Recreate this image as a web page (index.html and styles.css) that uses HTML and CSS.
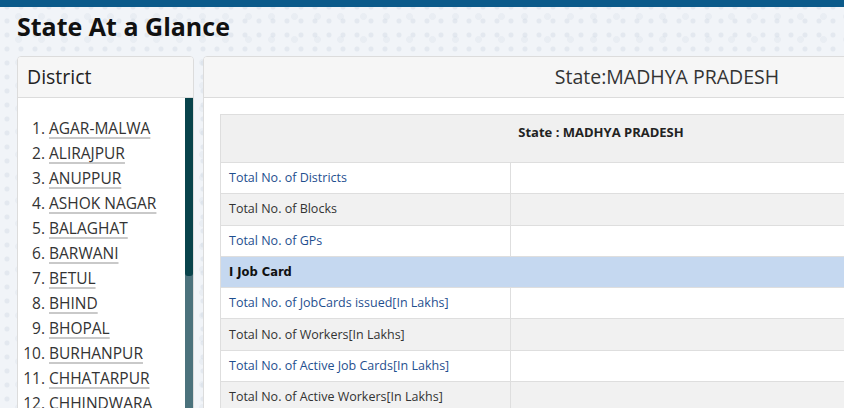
FILE: index.html
```html
<!DOCTYPE html>
<html lang="en">
<head>
<meta charset="utf-8">
<title>State At a Glance</title>
<link rel="stylesheet" href="styles.css">
</head>
<body>
<div class="topbar"></div>
<h1 class="page-title">State At a Glance</h1>
<div class="layout">
  <aside class="panel district-panel">
    <div class="panel-heading">District</div>
    <div class="district-body">
      <ol class="district-list">
        <li><a href="#">AGAR-MALWA</a></li>
        <li><a href="#">ALIRAJPUR</a></li>
        <li><a href="#">ANUPPUR</a></li>
        <li><a href="#">ASHOK NAGAR</a></li>
        <li><a href="#">BALAGHAT</a></li>
        <li><a href="#">BARWANI</a></li>
        <li><a href="#">BETUL</a></li>
        <li><a href="#">BHIND</a></li>
        <li><a href="#">BHOPAL</a></li>
        <li><a href="#">BURHANPUR</a></li>
        <li><a href="#">CHHATARPUR</a></li>
        <li><a href="#">CHHINDWARA</a></li>
        <li><a href="#">DAMOH</a></li>
        <li><a href="#">DATIA</a></li>
        <li><a href="#">DEWAS</a></li>
        <li><a href="#">DHAR</a></li>
        <li><a href="#">DINDORI</a></li>
        <li><a href="#">GUNA</a></li>
        <li><a href="#">GWALIOR</a></li>
        <li><a href="#">HARDA</a></li>
      </ol>
      <div class="scrollbar"><div class="scroll-thumb"></div></div>
    </div>
  </aside>
  <section class="panel state-panel">
    <div class="panel-heading centered">State:MADHYA PRADESH</div>
    <div class="state-body">
      <table class="glance-table">
        <thead>
          <tr><th colspan="2">State : MADHYA PRADESH</th></tr>
        </thead>
        <tbody>
          <tr><td class="label"><a href="#">Total No. of Districts</a></td><td></td></tr>
          <tr class="alt"><td class="label">Total No. of Blocks</td><td></td></tr>
          <tr><td class="label"><a href="#">Total No. of GPs</a></td><td></td></tr>
          <tr class="section"><td colspan="2">I Job Card</td></tr>
          <tr><td class="label"><a href="#">Total No. of JobCards issued[In Lakhs]</a></td><td></td></tr>
          <tr class="alt"><td class="label">Total No. of Workers[In Lakhs]</td><td></td></tr>
          <tr><td class="label"><a href="#">Total No. of Active Job Cards[In Lakhs]</a></td><td></td></tr>
          <tr class="alt"><td class="label">Total No. of Active Workers[In Lakhs]</td><td></td></tr>
        </tbody>
      </table>
    </div>
  </section>
</div>
</body>
</html>
```

FILE: styles.css
```css
* { box-sizing: border-box; }

html, body {
  margin: 0;
  padding: 0;
}

body {
  font-family: "Open Sans", "Noto Sans", sans-serif;
  color: #333;
  background-color: #f1f4f8;
  background-image:
    radial-gradient(circle, rgba(205, 215, 226, 0.4) 2px, transparent 3px),
    radial-gradient(circle, rgba(215, 223, 232, 0.3) 3px, transparent 4px);
  background-size: 14px 14px, 23px 23px;
  background-position: 0 0, 7px 5px;
  overflow: hidden;
  width: 1200px;
  height: 408px;
}

.topbar {
  height: 7px;
  background: #0b5a8a;
}

.page-title {
  margin: 0;
  padding: 2px 0 0 17px;
  height: 49px;
  font-size: 25px;
  line-height: 34px;
  font-weight: 700;
  color: #111;
}

.layout {
  display: flex;
  align-items: flex-start;
  gap: 9px;
  padding-left: 17px;
}

.panel {
  background: #fff;
  border: 1px solid #dcdcdc;
  border-radius: 4px;
  overflow: hidden;
}

.panel-heading {
  height: 41px;
  padding: 0 9px;
  background: #f6f6f6;
  border-bottom: 1px solid #dcdcdc;
  font-size: 19.5px;
  line-height: 40px;
  color: #222;
}

.panel-heading.centered {
  text-align: center;
  color: #333;
}

.district-panel {
  width: 177px;
  flex: none;
}

.district-body {
  display: flex;
  height: 488px;
}

.district-list {
  flex: 1;
  min-width: 0;
  overflow: hidden;
  margin: 0;
  padding: 18px 0 0 31px;
  font-size: 15.5px;
  line-height: 25px;
  color: #333;
  white-space: nowrap;
}

.district-list a {
  color: #333;
  text-decoration: underline;
  text-decoration-color: #c9c9c9;
  text-decoration-thickness: 2px;
  text-underline-offset: 3px;
}

.scrollbar {
  width: 8px;
  flex: none;
  background: #4b727c;
}

.scroll-thumb {
  height: 178px;
  background: #08434b;
  border-radius: 0 0 3px 3px;
}

.state-panel {
  width: 928px;
  flex: none;
}

.state-body {
  padding: 16px;
}

.glance-table {
  width: 762px;
  border-collapse: collapse;
  font-size: 12.5px;
}

.glance-table th {
  height: 48px;
  padding: 8px 8px 20px;
  background: #f0f0f0;
  border: 1px solid #dedede;
  font-weight: 700;
  font-size: 13px;
  line-height: 18px;
  color: #222;
  text-align: center;
  vertical-align: top;
}

.glance-table td {
  height: 31.3px;
  padding: 0 8px;
  border: 1px solid #dedede;
  line-height: 18px;
  background: #fff;
  color: #333;
}

.glance-table td.label {
  width: 290px;
}

.glance-table tr.alt td {
  background: #f1f1f1;
}

.glance-table td a {
  color: #1f4f8f;
  text-decoration: none;
}

.glance-table tr.section td {
  background: #c5d8f0;
  font-family: "DejaVu Sans", Verdana, sans-serif;
  font-weight: 700;
  font-size: 11.5px;
  color: #111;
}
```
